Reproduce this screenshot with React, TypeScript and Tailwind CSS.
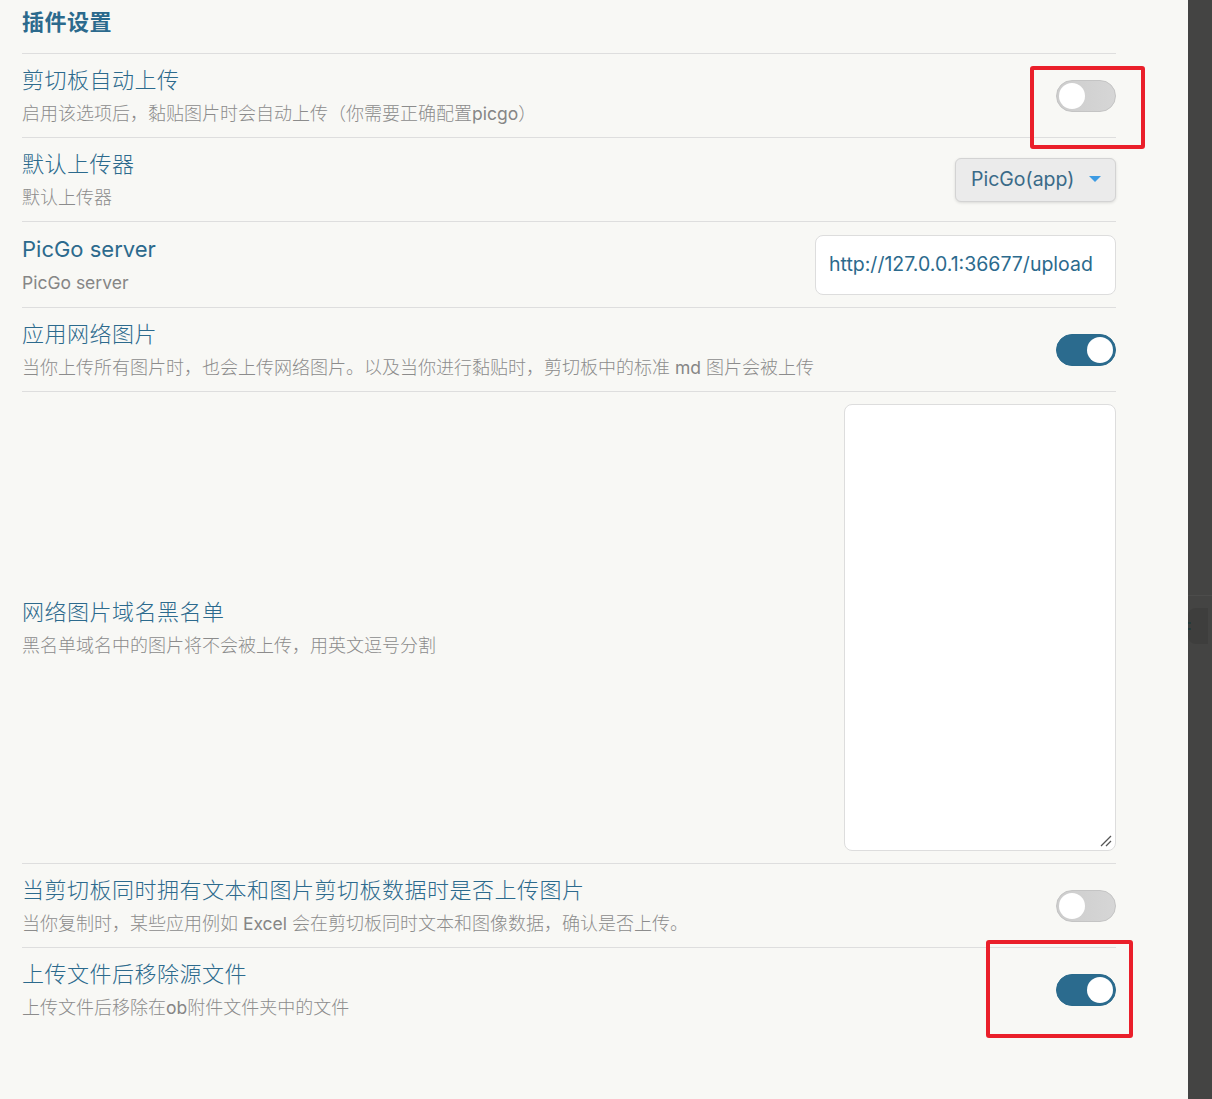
import { Fragment } from "react";

const CJK = /([\u3000-\u303f\u4e00-\u9fff\uff00-\uffef]+)/;

// split text so CJK runs can be a bit larger than the latin runs, like the screenshot
function Mixed({ text, cjk, latin }: { text: string; cjk: string; latin: string }) {
  const parts = text.split(CJK).filter((p) => p !== "");
  return (
    <>
      {parts.map((p, i) => (
        <span key={i} className={CJK.test(p) ? cjk : latin}>
          {p}
        </span>
      ))}
    </>
  );
}

function Toggle({ on }: { on: boolean }) {
  return (
    <div
      className={`flex h-[32px] w-[60px] items-center rounded-full border px-[2px] ${
        on
          ? "justify-end border-[#2a6a8c] bg-[#2b6b8e]"
          : "justify-start border-[#c4c4c4] bg-gradient-to-r from-[#cdcdcd] to-[#d6d6d6]"
      }`}
    >
      <div className="h-[26px] w-[26px] rounded-full bg-white" />
    </div>
  );
}

function Info({ name, desc }: { name: string; desc: string }) {
  return (
    <div className="flex flex-col pt-[3px]">
      <div className="leading-[28px] text-[#2c6a8d]">
        <Mixed text={name} cjk="text-[22px] font-light tracking-[0.5px]" latin="text-[22px]" />
      </div>
      <div className="mt-[4px] leading-[28px] text-[#8c8c8c]">
        <Mixed text={desc} cjk="text-[18px] font-light" latin="text-[17.5px] text-[#868686]" />
      </div>
    </div>
  );
}

function Row({ name, desc, children, tall }: { name: string; desc: string; children: React.ReactNode; tall?: string }) {
  return (
    <div className={`flex items-center justify-between border-t border-[#dedede] ${tall ?? "h-[84px]"}`}>
      <Info name={name} desc={desc} />
      {children}
    </div>
  );
}

export default function App() {
  return (
    <div
      className="relative flex h-[1099px] w-[1212px] bg-[#f8f8f5]"
      style={{ fontFamily: "Inter, 'Noto Sans CJK SC', sans-serif" }}
    >
      <div className="flex w-[1188px] flex-col pl-[22px] pr-[72px]">
        <div className="flex h-[53px] items-start pt-[6px]">
          <span className="text-[22px] font-bold tracking-[0.5px] text-[#2c6a8d]">插件设置</span>
        </div>

        <Row name="剪切板自动上传" desc="启用该选项后，黏贴图片时会自动上传（你需要正确配置picgo）">
          <Toggle on={false} />
        </Row>

        <Row name="默认上传器" desc="默认上传器">
          <div className="flex h-[44px] w-[161px] items-center justify-between rounded-[6px] border border-[#d3d3d3] bg-[#ebebeb] pl-[15px] pr-[14px] shadow-[0_1px_3px_rgba(0,0,0,0.12)]">
            <span className="text-[19.5px] text-[#3a6a88]">PicGo(app)</span>
            <svg width="12" height="7" viewBox="0 0 12 7">
              <path d="M0 0 L12 0 L6 6 Z" fill="#3d9be3" />
            </svg>
          </div>
        </Row>

        <Row name="PicGo server" desc="PicGo server" tall="h-[86px]">
          <div className="flex h-[60px] w-[301px] items-center rounded-[8px] border border-[#dddddd] bg-white px-[13px]">
            <span className="text-[19.5px] text-[#2c6a8d]">http://127.0.0.1:36677/upload</span>
          </div>
        </Row>

        <Row name="应用网络图片" desc="当你上传所有图片时，也会上传网络图片。以及当你进行黏贴时，剪切板中的标准 md 图片会被上传">
          <Toggle on />
        </Row>

        <Row name="网络图片域名黑名单" desc="黑名单域名中的图片将不会被上传，用英文逗号分割" tall="h-[472px]">
          <div className="relative h-[447px] w-[272px] rounded-[8px] border border-[#dddddd] bg-white">
            <svg className="absolute bottom-[3px] right-[3px]" width="12" height="12" viewBox="0 0 12 12">
              <path d="M1 11 L11 1 M6 11 L11 6" stroke="#555" strokeWidth="1.3" />
            </svg>
          </div>
        </Row>

        <Row name="当剪切板同时拥有文本和图片剪切板数据时是否上传图片" desc="当你复制时，某些应用例如 Excel 会在剪切板同时文本和图像数据，确认是否上传。">
          <Toggle on={false} />
        </Row>

        <Row name="上传文件后移除源文件" desc="上传文件后移除在ob附件文件夹中的文件">
          <Toggle on />
        </Row>
      </div>

      <div className="flex w-[24px] flex-col bg-[#444443]">
        <div className="mt-[595px] h-px w-full bg-[#4c4c4b]" />
        <div className="mt-[12px] flex h-[36px] w-[20px] flex-col justify-center gap-[4px] rounded-l-[8px] bg-[#3e3e3d]">
          <Fragment>
            <div className="h-[2px] w-[3px] bg-[#253a3a]" />
            <div className="h-[2px] w-[3px] bg-[#253a3a]" />
          </Fragment>
        </div>
      </div>

      {/* red annotation boxes */}
      <div className="absolute left-[1030px] top-[66px] h-[83px] w-[115px] rounded-[3px] border-[4px] border-[#ea1f2a]" />
      <div className="absolute left-[986px] top-[940px] h-[98px] w-[147px] rounded-[3px] border-[4px] border-[#ea1f2a]" />
    </div>
  );
}
